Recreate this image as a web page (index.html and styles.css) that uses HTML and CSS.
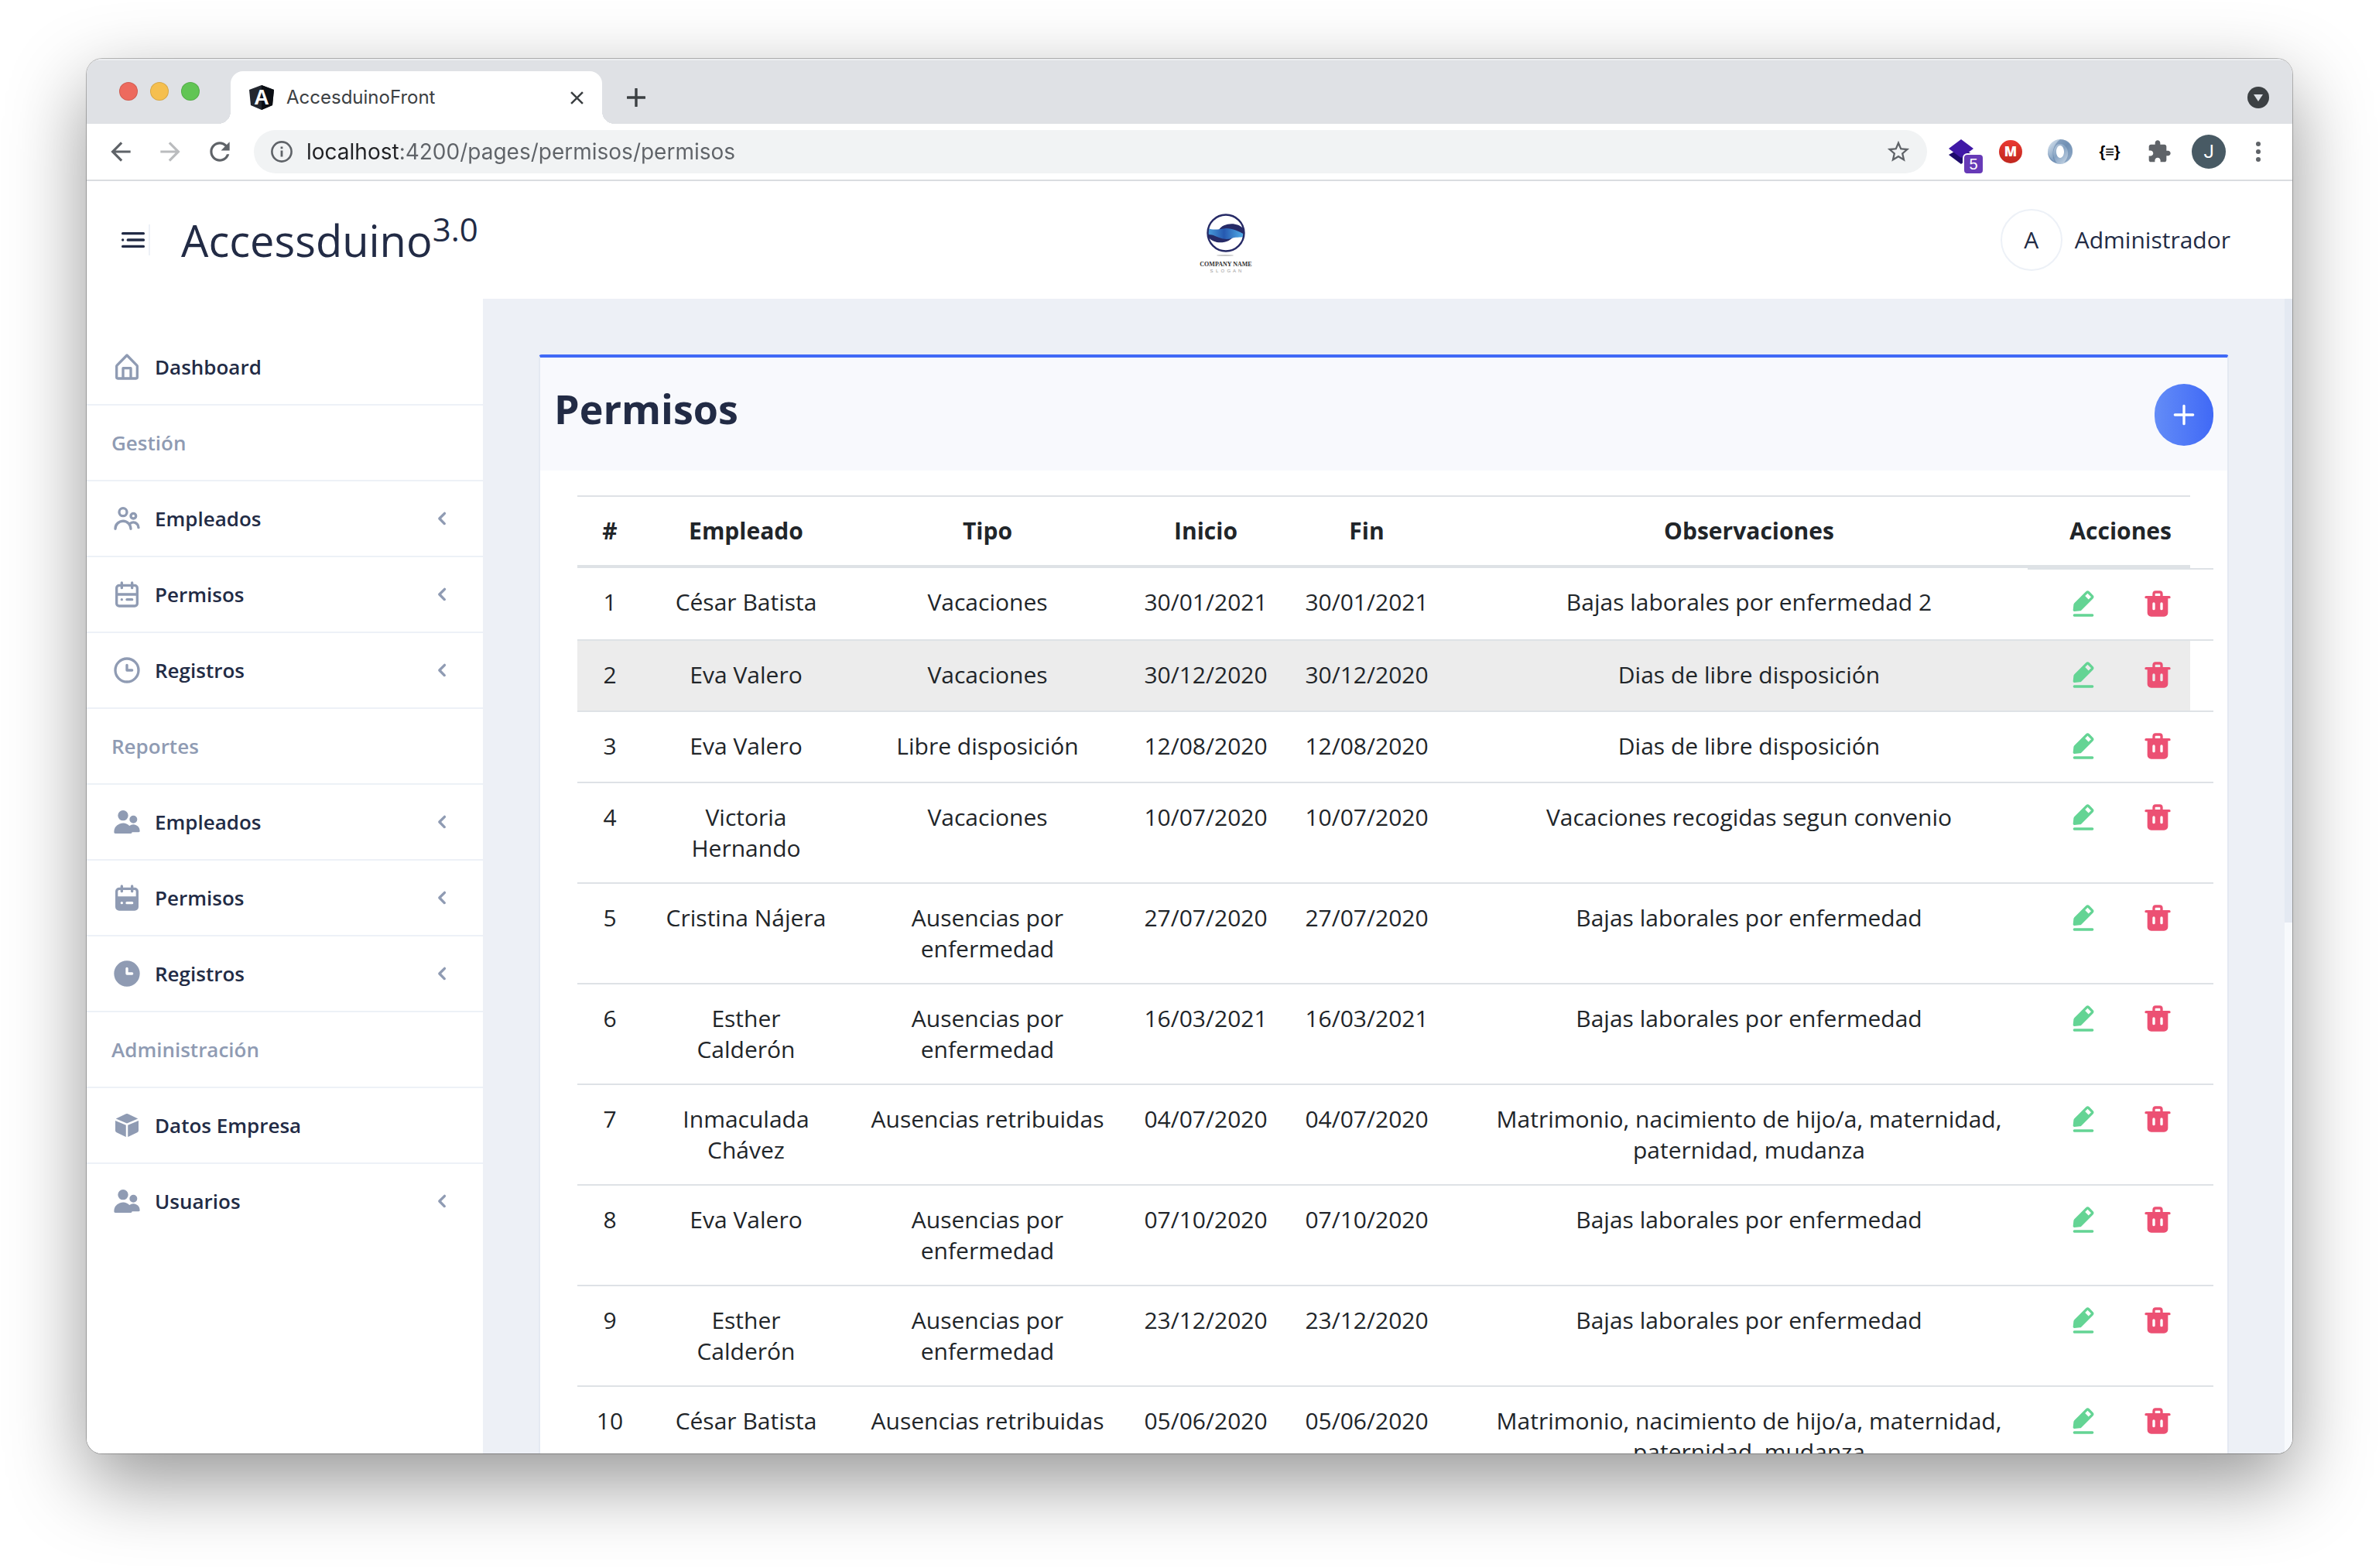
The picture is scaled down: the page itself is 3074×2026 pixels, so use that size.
FILE: index.html
```html
<!DOCTYPE html>
<html lang="es">
<head>
<meta charset="utf-8">
<title>AccesduinoFront</title>
<link rel="stylesheet" href="styles.css">
</head>
<body>
<svg class="sprite" aria-hidden="true">
  <symbol id="i-home" viewBox="0 0 24 24"><path d="M20.42 10.18L12.71 2.3a1 1 0 0 0-1.42 0l-7.71 7.89A2 2 0 0 0 3 11.62V20a2 2 0 0 0 1.89 2h14.22A2 2 0 0 0 21 20v-8.38a2.07 2.07 0 0 0-.58-1.44zM10 20v-6h4v6zm9 0h-3v-7a1 1 0 0 0-1-1H9a1 1 0 0 0-1 1v7H5v-8.42l7-7.15 7 7.19z"/></symbol>
  <symbol id="i-people-outline" viewBox="0 0 24 24"><path d="M9 11a4 4 0 1 0-4-4 4 4 0 0 0 4 4zm0-6a2 2 0 1 1-2 2 2 2 0 0 1 2-2zM17 13a3 3 0 1 0-3-3 3 3 0 0 0 3 3zm0-4a1 1 0 1 1-1 1 1 1 0 0 1 1-1zM17 14a5 5 0 0 0-3.06 1.05A7 7 0 0 0 2 20a1 1 0 0 0 2 0 5 5 0 0 1 10 0 1 1 0 0 0 2 0 6.9 6.9 0 0 0-.86-3.35A3 3 0 0 1 20 19a1 1 0 0 0 2 0 5 5 0 0 0-5-5z"/></symbol>
  <symbol id="i-people" viewBox="0 0 24 24"><path d="M9 11a4 4 0 1 0-4-4 4 4 0 0 0 4 4zM17 13a3 3 0 1 0-3-3 3 3 0 0 0 3 3zM21 20a1 1 0 0 0 1-1 5 5 0 0 0-8.06-3.95A7 7 0 0 0 2 20a1 1 0 0 0 1 1h12a1 1 0 0 0 1-1z"/></symbol>
  <symbol id="i-calendar-outline" viewBox="0 0 24 24"><path d="M18 4h-1V3a1 1 0 0 0-2 0v1H9V3a1 1 0 0 0-2 0v1H6a3 3 0 0 0-3 3v12a3 3 0 0 0 3 3h12a3 3 0 0 0 3-3V7a3 3 0 0 0-3-3zM6 6h1v1a1 1 0 0 0 2 0V6h6v1a1 1 0 0 0 2 0V6h1a1 1 0 0 1 1 1v4H5V7a1 1 0 0 1 1-1zm12 14H6a1 1 0 0 1-1-1v-6h14v6a1 1 0 0 1-1 1z"/><circle cx="8" cy="16" r="1"/><path d="M16 15h-4a1 1 0 0 0 0 2h4a1 1 0 0 0 0-2z"/></symbol>
  <symbol id="i-calendar" viewBox="0 0 24 24"><path d="M18 4h-1V3a1 1 0 0 0-2 0v1H9V3a1 1 0 0 0-2 0v1H6a3 3 0 0 0-3 3v12a3 3 0 0 0 3 3h12a3 3 0 0 0 3-3V7a3 3 0 0 0-3-3zM8 17a1 1 0 1 1 1-1 1 1 0 0 1-1 1zm8 0h-4a1 1 0 0 1 0-2h4a1 1 0 0 1 0 2zm3-6H5V7a1 1 0 0 1 1-1h1v1a1 1 0 0 0 2 0V6h6v1a1 1 0 0 0 2 0V6h1a1 1 0 0 1 1 1z"/></symbol>
  <symbol id="i-clock-outline" viewBox="0 0 24 24"><path d="M12 2a10 10 0 1 0 10 10A10 10 0 0 0 12 2zm0 18a8 8 0 1 1 8-8 8 8 0 0 1-8 8z"/><path d="M16 11h-3V8a1 1 0 0 0-2 0v4a1 1 0 0 0 1 1h4a1 1 0 0 0 0-2z"/></symbol>
  <symbol id="i-clock" viewBox="0 0 24 24"><path d="M12 2a10 10 0 1 0 10 10A10 10 0 0 0 12 2zm4 11h-4a1 1 0 0 1-1-1V8a1 1 0 0 1 2 0v3h3a1 1 0 0 1 0 2z"/></symbol>
  <symbol id="i-cube" viewBox="0 0 24 24"><path d="M11.25 11.83L3 8.36v7.73a1.69 1.69 0 0 0 1 1.52L11.19 21h.06zM12 10.5l8.51-3.57a1.62 1.62 0 0 0-.51-.38l-7.2-3.37a1.87 1.87 0 0 0-1.6 0L4 6.55a1.62 1.62 0 0 0-.51.38zM12.75 11.83V21h.05l7.2-3.39a1.69 1.69 0 0 0 1-1.51V8.36z"/></symbol>
  <symbol id="i-chevron" viewBox="0 0 24 24"><path d="M13.36 17a1 1 0 0 1-.72-.31l-3.86-4a1 1 0 0 1 0-1.4l4-4a1 1 0 1 1 1.42 1.42L10.9 12l3.18 3.3a1 1 0 0 1 0 1.41 1 1 0 0 1-.72.29z"/></symbol>
  <symbol id="i-edit" viewBox="0 0 24 24"><path d="M19 20H5a1 1 0 0 0 0 2h14a1 1 0 0 0 0-2zM5 18h.09l4.17-.38a2 2 0 0 0 1.21-.57l9-9a1.92 1.92 0 0 0-.07-2.71L16.66 2.6A2 2 0 0 0 14 2.53l-9 9a2 2 0 0 0-.57 1.21L4 16.91a1 1 0 0 0 .29.8A1 1 0 0 0 5 18zM15.27 4L18 6.73l-2 1.95L13.32 6z"/></symbol>
  <symbol id="i-trash" viewBox="0 0 24 24"><path d="M21 6h-5V4.33A2.42 2.42 0 0 0 13.5 2h-3A2.42 2.42 0 0 0 8 4.33V6H3a1 1 0 0 0 0 2h1v11a3 3 0 0 0 3 3h10a3 3 0 0 0 3-3V8h1a1 1 0 0 0 0-2zM10 16a1 1 0 0 1-2 0v-4a1 1 0 0 1 2 0zm0-11.67c0-.16.21-.33.5-.33h3c.29 0 .5.17.5.33V6h-4zM16 16a1 1 0 0 1-2 0v-4a1 1 0 0 1 2 0z"/></symbol>
  <symbol id="i-plus" viewBox="0 0 24 24"><path d="M19 11h-6V5a1 1 0 0 0-2 0v6H5a1 1 0 0 0 0 2h6v6a1 1 0 0 0 2 0v-6h6a1 1 0 0 0 0-2z"/></symbol>
  <symbol id="i-menu" viewBox="0 0 24 24"><circle cx="4" cy="12" r="1"/><rect x="7" y="11" width="14" height="2" rx=".9"/><rect x="3" y="16" width="18" height="2" rx=".9"/><rect x="3" y="6" width="18" height="2" rx=".9"/></symbol>
</svg>

<div class="window">
  <div class="tabstrip">
    <div class="lights"><span class="light light-close"></span><span class="light light-min"></span><span class="light light-max"></span></div>
    <div class="tab">
      <svg class="favicon" viewBox="0 0 32 32" aria-hidden="true"><path d="M16 0L0 6l2 20 14 6 14-6 2-20z" fill="#23272f"/><path d="M16 0v32l14-6 2-20z" fill="#0b0e14"/><text x="16" y="25" text-anchor="middle" font-family="Liberation Sans" font-weight="700" font-size="27" fill="#fff">A</text></svg>
      <span class="tab-title">AccesduinoFront</span>
      <button class="tab-close" aria-label="Cerrar pestaña"><svg viewBox="0 0 16 16"><path d="M1 1l14 14M15 1L1 15" stroke="currentColor" stroke-width="2.4" fill="none"/></svg></button>
    </div>
    <button class="tab-new" aria-label="Nueva pestaña"><svg viewBox="0 0 24 24"><path d="M12 1v22M1 12h22" stroke="currentColor" stroke-width="3.4" stroke-linecap="round"/></svg></button>
    <button class="tab-search" aria-label="Buscar pestañas"><svg viewBox="0 0 28 28"><circle cx="14" cy="14" r="14" fill="#3c4043"/><path d="M8 10h12l-6 9z" fill="#dee1e6"/></svg></button>
  </div>

  <div class="toolbar">
    <div class="nav-buttons">
      <button class="tool" aria-label="Atrás"><svg viewBox="0 0 24 24"><path d="M20 11H7.83l5.59-5.59L12 4l-8 8 8 8 1.41-1.41L7.83 13H20v-2z"/></svg></button>
      <button class="tool tool-off" aria-label="Adelante"><svg viewBox="0 0 24 24"><path d="M4 11h12.17l-5.59-5.59L12 4l8 8-8 8-1.41-1.41L16.17 13H4v-2z"/></svg></button>
      <button class="tool" aria-label="Recargar"><svg viewBox="0 0 24 24"><path d="M17.65 6.35C16.2 4.9 14.21 4 12 4c-4.42 0-7.99 3.58-7.99 8s3.57 8 7.99 8c3.73 0 6.84-2.55 7.73-6h-2.08c-.82 2.33-3.04 4-5.65 4-3.31 0-6-2.69-6-6s2.69-6 6-6c1.66 0 3.14.69 4.22 1.78L13 11h7V4l-2.35 2.35z"/></svg></button>
    </div>
    <div class="omnibox">
      <svg class="info" viewBox="0 0 28 28" aria-hidden="true"><circle cx="14" cy="14" r="12.6" fill="none" stroke="#5f6368" stroke-width="2.6"/><path d="M12.6 12.4h2.8v8h-2.8zM12.6 7.4h2.8v2.8h-2.8z" fill="#5f6368"/></svg>
      <input class="url" type="text" aria-label="Dirección" value="localhost:4200/pages/permisos/permisos">
      <button class="star" aria-label="Añadir a favoritos"><svg viewBox="0 0 24 24"><path d="M22 9.24l-7.19-.62L12 2 9.19 8.63 2 9.24l5.46 4.73L5.82 21 12 17.27 18.18 21l-1.63-7.03L22 9.24zM12 15.4l-3.76 2.27 1-4.28-3.32-2.88 4.38-.38L12 6.1l1.71 4.04 4.38.38-3.32 2.88 1 4.28L12 15.4z"/></svg></button>
    </div>
    <div class="extensions">
      <button class="ext" aria-label="Capas"><svg viewBox="0 0 44 44"><path d="M6 26l16-9 16 9-16 12z" fill="#1d0a6b"/><path d="M22 6l16 12-16 12L6 18z" fill="#4018a6"/></svg><span class="badge">5</span></button>
      <button class="ext" aria-label="Mega"><svg viewBox="0 0 44 44"><defs><linearGradient id="g-red" x2="0" y2="1"><stop offset="0" stop-color="#ea3a32"/><stop offset="1" stop-color="#c0271f"/></linearGradient></defs><circle cx="22" cy="22" r="15" fill="url(#g-red)"/><text x="22" y="28" text-anchor="middle" font-family="Open Sans" font-weight="800" font-size="17" fill="#fff">M</text></svg></button>
      <button class="ext" aria-label="Visor"><svg viewBox="0 0 44 44"><defs><linearGradient id="g-ring" x2="1" y2="1"><stop offset="0" stop-color="#dfe9f2"/><stop offset=".5" stop-color="#86a3c3"/><stop offset="1" stop-color="#dbe6f1"/></linearGradient></defs><path fill-rule="evenodd" d="M22 6a16 16 0 1 0 0 32 16 16 0 1 0 0-32zm0 8c3 0 5 4 5 8s-2 8-5 8-5-4-5-8 2-8 5-8z" fill="url(#g-ring)"/><path d="M22 6c12 0 17 9 16 17-1 7-6 12-11 13 8-8 6-19-1-23-4-2-8-1-10 2-4 6-4 14 2 22C9 35 6 29 6 22c1 5 4 10 8 12-3-10-2-20 8-28z" fill="#5d80a8" opacity=".55"/></svg></button>
      <button class="ext ext-json" aria-label="JSON">{≡}</button>
      <button class="ext" aria-label="Extensiones"><svg class="puzzle" viewBox="0 0 24 24"><path d="M20.5 11H19V7c0-1.1-.9-2-2-2h-4V3.5C13 2.12 11.88 1 10.5 1S8 2.12 8 3.5V5H4c-1.1 0-1.99.9-1.99 2v3.8H3.5c1.49 0 2.7 1.21 2.7 2.7s-1.21 2.7-2.7 2.7H2V20c0 1.1.9 2 2 2h3.8v-1.5c0-1.49 1.21-2.7 2.7-2.7 1.49 0 2.7 1.21 2.7 2.7V22H17c1.1 0 2-.9 2-2v-4h1.5c1.38 0 2.5-1.12 2.5-2.5S21.88 11 20.5 11z" fill="#5f6368"/></svg></button>
      <button class="ext ext-profile" aria-label="Perfil">J</button>
      <button class="ext" aria-label="Menú"><svg viewBox="0 0 44 44" fill="#5f6368"><circle cx="22" cy="12" r="3"/><circle cx="22" cy="22" r="3"/><circle cx="22" cy="32" r="3"/></svg></button>
    </div>
  </div>

  <header class="header">
    <div class="brand">
      <button class="menu-toggle" aria-label="Menú lateral"><svg class="icon"><use href="#i-menu"/></svg></button>
      <a class="brand-name" href="#">Accessduino<sup>3.0</sup></a>
    </div>
    <svg class="company" viewBox="0 0 124 100" role="img" aria-label="Company name">
      <defs><linearGradient id="g-wave"><stop offset="0" stop-color="#4a9fdc"/><stop offset=".45" stop-color="#2659b0"/><stop offset="1" stop-color="#55b4ec"/></linearGradient></defs>
      <ellipse cx="61" cy="70" rx="11" ry="1" fill="#c9c9c9"/>
      <circle cx="62" cy="41" r="23" fill="#fff"/>
      <path d="M53 37c5-9 24-11 32-1v10c-10-6-20-9-32-9z" fill="#262a66"/>
      <path d="M39 40c8 2 20 8 34 4-6 11-26 13-34 2z" fill="#262a66"/>
      <path d="M39 35c7 3 15 1 23 0 9 0 17 4 24 8v3c-6 1-12 0-17 2-9 3-18-2-23-4-3-1-5-1-8-1z" fill="url(#g-wave)"/>
      <circle cx="62" cy="41" r="23.5" fill="none" stroke="#262a66" stroke-width="2.4"/>
      <text x="62" y="84" text-anchor="middle" font-family="Liberation Serif" font-weight="700" font-size="8" fill="#333">COMPANY NAME</text>
      <text x="62" y="92" text-anchor="middle" font-family="Liberation Sans" font-size="6" fill="#999" xml:space="preserve">S  L  O  G  A  N</text>
    </svg>
    <div class="user"><span class="user-pic">A</span><span class="user-name">Administrador</span></div>
  </header>

  <div class="body">
    <nav class="sidebar">
      <ul class="menu">
        <li><a class="menu-item" href="#"><svg class="icon"><use href="#i-home"/></svg><span class="menu-text">Dashboard</span></a></li>
        <li class="menu-group">Gestión</li>
        <li><a class="menu-item" href="#"><svg class="icon"><use href="#i-people-outline"/></svg><span class="menu-text">Empleados</span><svg class="icon"><use href="#i-chevron"/></svg></a></li>
        <li><a class="menu-item" href="#"><svg class="icon"><use href="#i-calendar-outline"/></svg><span class="menu-text">Permisos</span><svg class="icon"><use href="#i-chevron"/></svg></a></li>
        <li><a class="menu-item" href="#"><svg class="icon"><use href="#i-clock-outline"/></svg><span class="menu-text">Registros</span><svg class="icon"><use href="#i-chevron"/></svg></a></li>
        <li class="menu-group">Reportes</li>
        <li><a class="menu-item" href="#"><svg class="icon"><use href="#i-people"/></svg><span class="menu-text">Empleados</span><svg class="icon"><use href="#i-chevron"/></svg></a></li>
        <li><a class="menu-item" href="#"><svg class="icon"><use href="#i-calendar"/></svg><span class="menu-text">Permisos</span><svg class="icon"><use href="#i-chevron"/></svg></a></li>
        <li><a class="menu-item" href="#"><svg class="icon"><use href="#i-clock"/></svg><span class="menu-text">Registros</span><svg class="icon"><use href="#i-chevron"/></svg></a></li>
        <li class="menu-group">Administración</li>
        <li><a class="menu-item" href="#"><svg class="icon"><use href="#i-cube"/></svg><span class="menu-text">Datos Empresa</span></a></li>
        <li><a class="menu-item" href="#"><svg class="icon"><use href="#i-people"/></svg><span class="menu-text">Usuarios</span><svg class="icon"><use href="#i-chevron"/></svg></a></li>
      </ul>
    </nav>

    <main class="content">
      <section class="card">
        <div class="card-header">
          <h1 class="card-title">Permisos</h1>
          <button class="add" aria-label="Añadir permiso"><svg class="icon"><use href="#i-plus"/></svg></button>
        </div>
        <div class="card-body">
          <table class="table">
            <colgroup><col class="c-num"><col class="c-emp"><col class="c-type"><col class="c-date"><col class="c-date"><col><col class="c-act"></colgroup>
            <thead>
              <tr><th>#</th><th>Empleado</th><th>Tipo</th><th>Inicio</th><th>Fin</th><th class="obs">Observaciones</th><th class="act-head">Acciones</th></tr>
            </thead>
            <tbody>
              <tr><td>1</td><td>César Batista</td><td>Vacaciones</td><td>30/01/2021</td><td>30/01/2021</td><td class="obs">Bajas laborales por enfermedad 2</td><td class="actions"><button class="act edit" aria-label="Editar"><svg class="icon"><use href="#i-edit"/></svg></button><button class="act del" aria-label="Eliminar"><svg class="icon"><use href="#i-trash"/></svg></button></td></tr>
              <tr class="active"><td>2</td><td>Eva Valero</td><td>Vacaciones</td><td>30/12/2020</td><td>30/12/2020</td><td class="obs">Dias de libre disposición</td><td class="actions"><button class="act edit" aria-label="Editar"><svg class="icon"><use href="#i-edit"/></svg></button><button class="act del" aria-label="Eliminar"><svg class="icon"><use href="#i-trash"/></svg></button></td></tr>
              <tr><td>3</td><td>Eva Valero</td><td>Libre disposición</td><td>12/08/2020</td><td>12/08/2020</td><td class="obs">Dias de libre disposición</td><td class="actions"><button class="act edit" aria-label="Editar"><svg class="icon"><use href="#i-edit"/></svg></button><button class="act del" aria-label="Eliminar"><svg class="icon"><use href="#i-trash"/></svg></button></td></tr>
              <tr><td>4</td><td>Victoria Hernando</td><td>Vacaciones</td><td>10/07/2020</td><td>10/07/2020</td><td class="obs">Vacaciones recogidas segun convenio</td><td class="actions"><button class="act edit" aria-label="Editar"><svg class="icon"><use href="#i-edit"/></svg></button><button class="act del" aria-label="Eliminar"><svg class="icon"><use href="#i-trash"/></svg></button></td></tr>
              <tr><td>5</td><td>Cristina Nájera</td><td>Ausencias por enfermedad</td><td>27/07/2020</td><td>27/07/2020</td><td class="obs">Bajas laborales por enfermedad</td><td class="actions"><button class="act edit" aria-label="Editar"><svg class="icon"><use href="#i-edit"/></svg></button><button class="act del" aria-label="Eliminar"><svg class="icon"><use href="#i-trash"/></svg></button></td></tr>
              <tr><td>6</td><td>Esther Calderón</td><td>Ausencias por enfermedad</td><td>16/03/2021</td><td>16/03/2021</td><td class="obs">Bajas laborales por enfermedad</td><td class="actions"><button class="act edit" aria-label="Editar"><svg class="icon"><use href="#i-edit"/></svg></button><button class="act del" aria-label="Eliminar"><svg class="icon"><use href="#i-trash"/></svg></button></td></tr>
              <tr><td>7</td><td>Inmaculada Chávez</td><td>Ausencias retribuidas</td><td>04/07/2020</td><td>04/07/2020</td><td class="obs">Matrimonio, nacimiento de hijo/a, maternidad, paternidad, mudanza</td><td class="actions"><button class="act edit" aria-label="Editar"><svg class="icon"><use href="#i-edit"/></svg></button><button class="act del" aria-label="Eliminar"><svg class="icon"><use href="#i-trash"/></svg></button></td></tr>
              <tr><td>8</td><td>Eva Valero</td><td>Ausencias por enfermedad</td><td>07/10/2020</td><td>07/10/2020</td><td class="obs">Bajas laborales por enfermedad</td><td class="actions"><button class="act edit" aria-label="Editar"><svg class="icon"><use href="#i-edit"/></svg></button><button class="act del" aria-label="Eliminar"><svg class="icon"><use href="#i-trash"/></svg></button></td></tr>
              <tr><td>9</td><td>Esther Calderón</td><td>Ausencias por enfermedad</td><td>23/12/2020</td><td>23/12/2020</td><td class="obs">Bajas laborales por enfermedad</td><td class="actions"><button class="act edit" aria-label="Editar"><svg class="icon"><use href="#i-edit"/></svg></button><button class="act del" aria-label="Eliminar"><svg class="icon"><use href="#i-trash"/></svg></button></td></tr>
              <tr><td>10</td><td>César Batista</td><td>Ausencias retribuidas</td><td>05/06/2020</td><td>05/06/2020</td><td class="obs">Matrimonio, nacimiento de hijo/a, maternidad, paternidad, mudanza</td><td class="actions"><button class="act edit" aria-label="Editar"><svg class="icon"><use href="#i-edit"/></svg></button><button class="act del" aria-label="Eliminar"><svg class="icon"><use href="#i-trash"/></svg></button></td></tr>
            </tbody>
          </table>
        </div>
      </section>
    </main>
    <div class="scroll-track"><div class="scroll-thumb"></div></div>
  </div>
</div>
</body>
</html>
```
FILE: styles.css
```css
* { box-sizing: border-box; }

body {
  margin: 0;
  height: 100vh;
  padding: 76px 112px 148px;
  overflow: hidden;
  background: #fff;
  color: #222b45;
  font-family: "Open Sans", sans-serif;
  font-size: 30px;
  line-height: 40px;
}

button {
  margin: 0;
  padding: 0;
  border: 0;
  background: none;
  color: inherit;
  font: inherit;
}

a { color: inherit; text-decoration: none; }

svg { display: block; }

.sprite { display: none; }

.icon { width: 40px; height: 40px; flex: none; fill: currentColor; }

.window {
  display: flex;
  flex-direction: column;
  height: 100%;
  overflow: hidden;
  border-radius: 20px;
  background: #fff;
  box-shadow: 0 0 0 1px rgba(0, 0, 0, .25), 0 36px 100px rgba(0, 0, 0, .42);
}

/* Browser tab strip */
.tabstrip {
  display: flex;
  flex: none;
  align-items: flex-end;
  height: 84px;
  padding: 0 30px 0 42px;
  background: #dfe1e5;
  color: #3c4043;
  font-family: Inter, sans-serif;
  font-size: 24px;
  line-height: 32px;
  box-shadow: inset 0 2px 0 #eceef1;
}

.lights { display: flex; gap: 16px; align-self: center; margin-right: 40px; }
.light { width: 24px; height: 24px; border-radius: 50%; border: 1px solid rgba(0, 0, 0, .12); }
.light-close { background: #ed6a5e; }
.light-min { background: #f5bf4f; }
.light-max { background: #61c554; }

.tab {
  position: relative;
  display: flex;
  align-items: center;
  width: 480px;
  height: 68px;
  padding: 0 24px;
  border-radius: 16px 16px 0 0;
  background: #fff;
}
.tab::before,
.tab::after {
  content: "";
  position: absolute;
  bottom: 0;
  width: 16px;
  height: 16px;
}
.tab::before { left: -16px; background: radial-gradient(circle at 0 0, transparent 16px, #fff 16px); }
.tab::after { right: -16px; background: radial-gradient(circle at 100% 0, transparent 16px, #fff 16px); }
.favicon { width: 32px; height: 32px; margin-right: 16px; }
.tab-title { flex: 1; }
.tab-close svg { width: 17px; height: 17px; }
.tab-new { align-self: center; margin: 16px 0 0 32px; }
.tab-new svg { width: 24px; height: 24px; }
.tab-search { align-self: center; margin: 16px 0 0 auto; }
.tab-search svg { width: 28px; height: 28px; }

/* Browser toolbar */
.toolbar {
  display: flex;
  flex: none;
  align-items: center;
  height: 74px;
  padding: 0 22px 0 24px;
  border-bottom: 2px solid #dadce0;
}
.nav-buttons { display: flex; gap: 24px; margin-right: 24px; }
.tool { color: #5f6368; }
.tool svg { width: 38px; height: 38px; margin: 1px; fill: currentColor; }
.tool-off { color: #babcbe; }

.omnibox {
  display: flex;
  flex: 1;
  align-items: center;
  height: 56px;
  padding: 0 20px 0 22px;
  border-radius: 28px;
  background: #f1f3f4;
}
.info { width: 28px; height: 28px; margin-right: 18px; }
.url {
  flex: 1;
  min-width: 0;
  padding: 0;
  border: 0;
  outline: 0;
  background: linear-gradient(90deg, #202124 120px, #5f6368 120px);
  background-clip: text;
  -webkit-background-clip: text;
  color: transparent;
  font: 28px/40px Inter, sans-serif;
}
.star svg { width: 34px; height: 34px; fill: #5f6368; }

.extensions { display: flex; gap: 20px; margin-left: 22px; }
.ext { position: relative; width: 44px; height: 44px; }
.ext .puzzle { width: 32px; height: 32px; margin: 6px; }
.ext-json { color: #000; font: 700 20px/44px "Liberation Sans", sans-serif; }
.ext-profile { border-radius: 50%; background: #485a64; color: #fff; font: 24px/44px Roboto, sans-serif; }
.badge {
  position: absolute;
  right: -8px;
  bottom: -8px;
  width: 28px;
  height: 28px;
  border: 2px solid #fff;
  border-radius: 6px;
  background: #673ab7;
  color: #fff;
  font: 20px/24px "Liberation Sans", sans-serif;
  text-align: center;
}

/* Application header */
.header {
  display: flex;
  flex: none;
  align-items: center;
  justify-content: space-between;
  height: 152px;
  padding: 0 80px 0 40px;
}
.brand { display: flex; align-items: center; gap: 40px; }
.menu-toggle { border-right: 2px solid #edf1f7; }
.brand-name { font-size: 56px; line-height: 72px; }
.brand-name sup { font-size: 42px; line-height: 0; vertical-align: 20px; }
.company { width: 124px; height: 100px; margin-right: 34px; }
.user { display: flex; align-items: center; gap: 16px; }
.user-pic {
  width: 80px;
  height: 80px;
  border: 2px solid #edf1f7;
  border-radius: 50%;
  font-size: 30px;
  line-height: 76px;
  text-align: center;
}

.body { display: flex; flex: 1; min-height: 0; background: #edf0f6; }

/* Side navigation */
.sidebar { flex: none; width: 512px; padding-top: 40px; background: #fff; }
.menu { margin: 0; padding: 0; list-style: none; font-size: 26px; font-weight: 600; line-height: 48px; }
.menu li { border-bottom: 2px solid #edf1f7; }
.menu li:last-child { border-bottom: 0; }
.menu-item { display: flex; align-items: center; gap: 16px; padding: 24px 32px; }
.menu-text { flex: 1; }
.menu .icon { color: #8f9bb3; }
.menu-group { padding: 24px 32px; color: #8f9bb3; }

/* Content card */
.content { flex: 1; min-width: 0; padding: 72px; overflow: hidden; }
.card {
  border: 2px solid #e4e9f2;
  border-top: 4px solid #4069f6;
  border-radius: 4px;
  background: #fff;
}
.card-header {
  display: flex;
  align-items: flex-start;
  justify-content: space-between;
  padding: 34px 18px 32px;
  background: #f8f9fd;
}
.card-title { margin: 0; font-size: 52px; line-height: 64px; }
.add {
  display: flex;
  align-items: center;
  justify-content: center;
  width: 76px;
  height: 80px;
  border-radius: 40px;
  background: linear-gradient(90deg, #638cf7, #4069f6);
  color: #fff;
}
.card-body { padding: 32px 48px; }

.table {
  width: 100%;
  table-layout: fixed;
  border-collapse: separate;
  border-spacing: 0;
  color: #212529;
  text-align: center;
}
.c-num { width: 84px; }
.c-emp { width: 268px; }
.c-type { width: 356px; }
.c-date { width: 208px; }
.c-act { width: 210px; }
.table th { padding: 24px; border-top: 2px solid #dee2e6; border-bottom: 4px solid #dee2e6; }
.table td { padding: 24px; border-top: 2px solid #dee2e6; vertical-align: top; }
.table tbody tr:first-child td:not(.actions) { border-top: 0; }
.table .obs { padding-left: 54px; }
.table .act-head { text-align: right; }
.table .actions { display: flex; width: 240px; }
.active { background: #ececec; }
.act { display: flex; height: 42px; padding: 0 28px; }
.edit { color: #64d494; }
.del { color: #ec5073; }

.scroll-track { flex: none; width: 10px; background: #f7f9fc; }
.scroll-thumb { height: 54%; background: #e4e9f2; }
```
